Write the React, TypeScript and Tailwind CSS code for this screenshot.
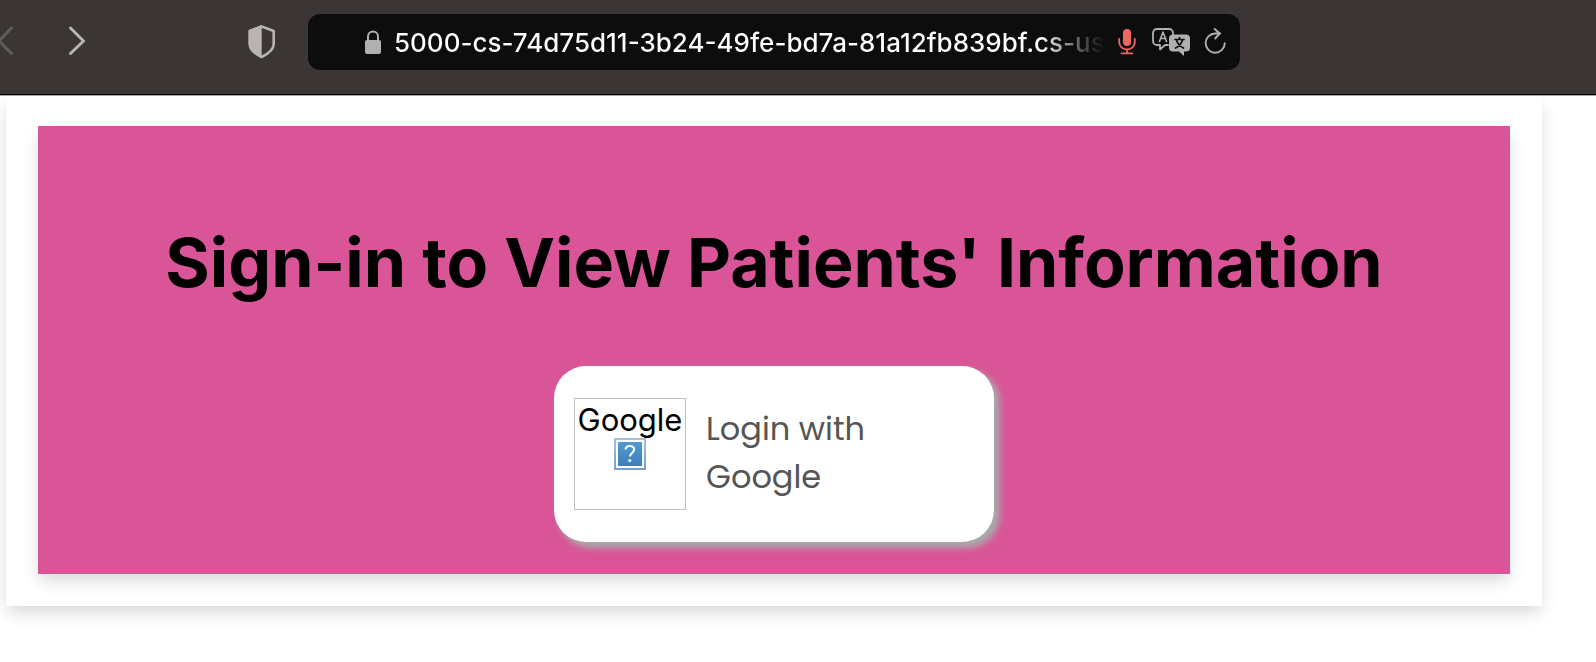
function BrowserBar() {
  return (
    <header className="flex items-start border-b border-[#a8a4a4] bg-[#3b3535] text-[#b9b3b3]">
      <div className="flex h-[95px] w-full items-start border-b border-black pt-[14px]">
        <nav className="flex h-14 w-[308px] shrink-0 items-center" aria-label="History">
          <button type="button" aria-label="Back" className="w-[66px] text-[#625d5d]">
            <svg width="16" height="32" viewBox="0 0 16 32" fill="none" stroke="currentColor" strokeWidth="3" strokeLinecap="round" strokeLinejoin="round">
              <path d="M11.500 2-1 15 11.500 27.500" />
            </svg>
          </button>
          <button type="button" aria-label="Forward">
            <svg width="20" height="32" viewBox="0 0 20 32" fill="none" stroke="currentColor" strokeWidth="3" strokeLinecap="round" strokeLinejoin="round">
              <path d="M4.500 2 17.500 15 4.500 27.500" />
            </svg>
          </button>
          <button type="button" aria-label="Privacy report" className="ml-auto mr-8">
            <svg width="28" height="36" viewBox="0 0 28 36">
              <path d="M14 2.500 26 7v13c0 6-5 9.500-12 13C7 29.500 2 26 2 20V7z" transform="translate(-.3 0)" fill="none" stroke="currentColor" strokeWidth="2.600" strokeLinejoin="round" />
              <path d="M14 1v33C6 30 1 26.500 1 20V6z" transform="translate(-.3 0)" fill="currentColor" />
            </svg>
          </button>
        </nav>
        <div className="flex h-14 w-[932px] items-center rounded-xl bg-[#0d0d0d] pl-[56px] pr-3 text-[#b0b0b0]">
          <svg className="shrink-0" width="18" height="24" viewBox="0 0 18 24">
            <path d="M4 11V6.500a5 5 0 0 1 10 0V11" fill="none" stroke="currentColor" strokeWidth="2" />
            <rect x="1" y="10" width="16" height="14" rx="2" fill="currentColor" />
          </svg>
          <span className="ml-3 min-w-0 flex-1 whitespace-nowrap pt-px text-[26px] leading-9 font-medium">
            <span className="bg-linear-to-r from-white from-[91%] to-[#0d0d0d] bg-clip-text text-transparent">
              5000-cs-74d75d11-3b24-49fe-bd7a-81a12fb839bf.cs-us
            </span>
          </span>
          <button type="button" aria-label="Microphone" className="ml-4 shrink-0 text-[#ee6761]">
            <svg width="18" height="28" viewBox="0 0 18 28" fill="none" stroke="currentColor" strokeWidth="1.800" strokeLinecap="round">
              <rect x="5" y="1" width="8" height="17" rx="4" fill="currentColor" stroke="none" />
              <path d="M1.200 11v3a7.800 7.500 0 0 0 15.600 0v-3M9 21.500V25M3.500 25.300h11" />
            </svg>
          </button>
          <button type="button" aria-label="Translate" className="ml-4 shrink-0">
            <svg width="38" height="28" viewBox="0 0 38 28" strokeLinejoin="round" strokeLinecap="round">
              <path d="M16 17h-3l-5 4.500V17H5a4 4 0 0 1-4-4V5a4 4 0 0 1 4-4h12a4 4 0 0 1 4 4v2" fill="none" stroke="currentColor" strokeWidth="1.800" />
              <path d="m7.500 13.500 3.500-9.500 3.500 9.500M8.800 10.500h4.500" fill="none" stroke="currentColor" strokeWidth="1.600" />
              <path d="M21 6.500h13a4 4 0 0 1 4 4v9a4 4 0 0 1-4 4h-2V28l-5-4.500h-6a4 4 0 0 1-4-4v-9a4 4 0 0 1 4-4z" fill="currentColor" />
              <path d="M23 11.500h9M27.500 9.500v2M30.500 12c-1 3.500-3.500 6.500-7 8M24.500 12c1 3.500 3.500 6.500 7 8" fill="none" stroke="#0d0d0d" strokeWidth="1.700" />
            </svg>
          </button>
          <button type="button" aria-label="Reload" className="ml-[14px] shrink-0">
            <svg width="24" height="28" viewBox="0 0 24 28" fill="none" stroke="currentColor" strokeWidth="1.900" strokeLinecap="round" strokeLinejoin="round">
              <path d="M16.500 6H11.500a9.600 9.600 0 1 0 9.600 9.600M11 1.500l5 4.500-4.500 5" transform="translate(-.3 -.5)" />
            </svg>
          </button>
        </div>
      </div>
    </header>
  );
}

function MissingLogo() {
  return (
    <span className="flex size-28 shrink-0 flex-col items-center overflow-hidden border border-[#c0c0c0] pt-[2px] text-black">
      <span className="text-[31px] leading-[37px]">Google</span>
      <svg className="shrink-0" width="32" height="32" viewBox="0 0 32 32" aria-hidden="true">
        <defs>
          <linearGradient id="tile" x1="0" y1="0" x2="0" y2="1">
            <stop offset="0" stopColor="#509bd2" />
            <stop offset="1" stopColor="#3f7fb9" />
          </linearGradient>
          <linearGradient id="frame" x1="0" y1="0" x2="0" y2="1">
            <stop offset="0" stopColor="#a9bddd" />
            <stop offset="1" stopColor="#7c9dcb" />
          </linearGradient>
        </defs>
        <rect x="1" y="1" width="30" height="30" fill="#fff" stroke="url(#frame)" strokeWidth="2" />
        <rect x="4" y="4" width="24" height="24" fill="url(#tile)" />
        <path d="M11.500 11.500c.2-2.300 2-3.500 4.300-3.500 2.500 0 4.300 1.400 4.300 3.600 0 3.500-4.200 3.200-4.200 6.900" fill="none" stroke="#fff" strokeWidth="2" />
        <circle cx="15.800" cy="22.500" r="1.600" fill="#fff" />
      </svg>
    </span>
  );
}

export default function App() {
  return (
    <div className="min-h-screen bg-white font-['Inter',sans-serif]">
      <BrowserBar />
      <div className="overflow-hidden pb-14 pl-[6px] pr-[54px]">
        <main className="p-8 pt-[30px] shadow-[0_8px_16px_-2px_rgba(0,0,0,0.16)]">
          <section className="flex flex-col items-center bg-[#da5597] p-8 shadow-[0_8px_16px_-2px_rgba(0,0,0,0.16)]">
            <h1 className="my-12 text-center text-[68px] leading-[112px] font-bold text-black">
              Sign-in to View Patients' Information
            </h1>
            <button
              type="button"
              className="flex w-[440px] items-center gap-5 rounded-[32px] bg-white px-5 py-8 text-left shadow-[5px_5px_6px_1px_#a9a9a9]"
            >
              <MissingLogo />
              <span className="w-44 pb-[2px] font-['Poppins','Inter',sans-serif] text-[32px] leading-[48px] text-[#555555]">
                Login with Google
              </span>
            </button>
          </section>
        </main>
      </div>
    </div>
  );
}
